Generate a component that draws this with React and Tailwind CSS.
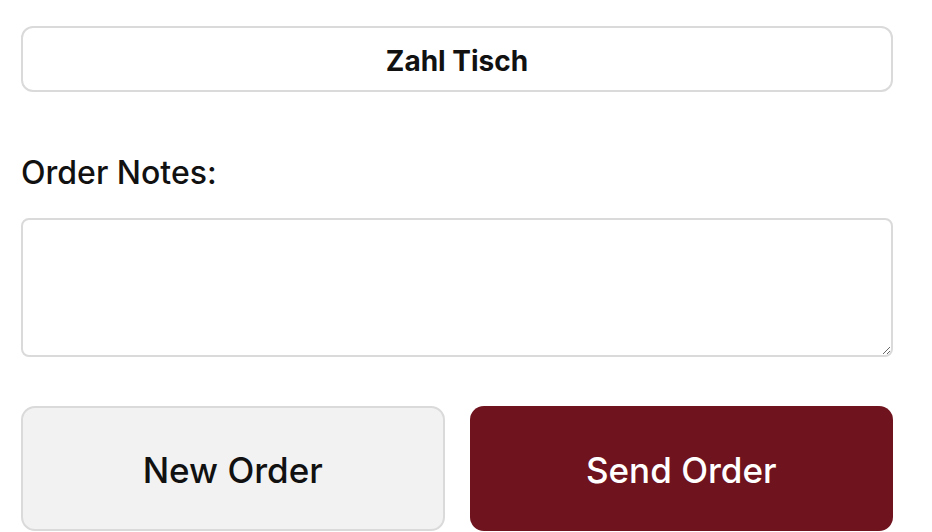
export default function App() {
  return (
    <div className="min-h-screen bg-white overflow-hidden" style={{ fontFamily: "Inter, 'Noto Sans', sans-serif" }}>
      <div className="ml-[21px] w-[872px] pt-[26px]">
        <button className="w-full h-[66px] pt-[3px] rounded-[12px] border-2 border-[#dadada] bg-white text-[28px] font-bold text-[#111]">
          Zahl Tisch
        </button>

        <label className="block mt-[62px] text-[32px] leading-[38px] font-medium text-[#111]">
          Order Notes:
        </label>
        <textarea className="block mt-[26px] w-full h-[139px] rounded-[8px] border-2 border-[#dadada] bg-white p-3 text-[20px] outline-none" />

        <div className="mt-[49px] grid grid-cols-2 gap-[25px]">
          <button className="h-[125px] pt-[3px] rounded-[14px] border-2 border-[#dadada] bg-[#f2f2f2] text-[35px] font-medium text-[#111]">
            New Order
          </button>
          <button className="h-[125px] pt-[3px] rounded-[14px] bg-[#6f131e] text-[35px] font-medium text-white">
            Send Order
          </button>
        </div>
      </div>
    </div>
  );
}
